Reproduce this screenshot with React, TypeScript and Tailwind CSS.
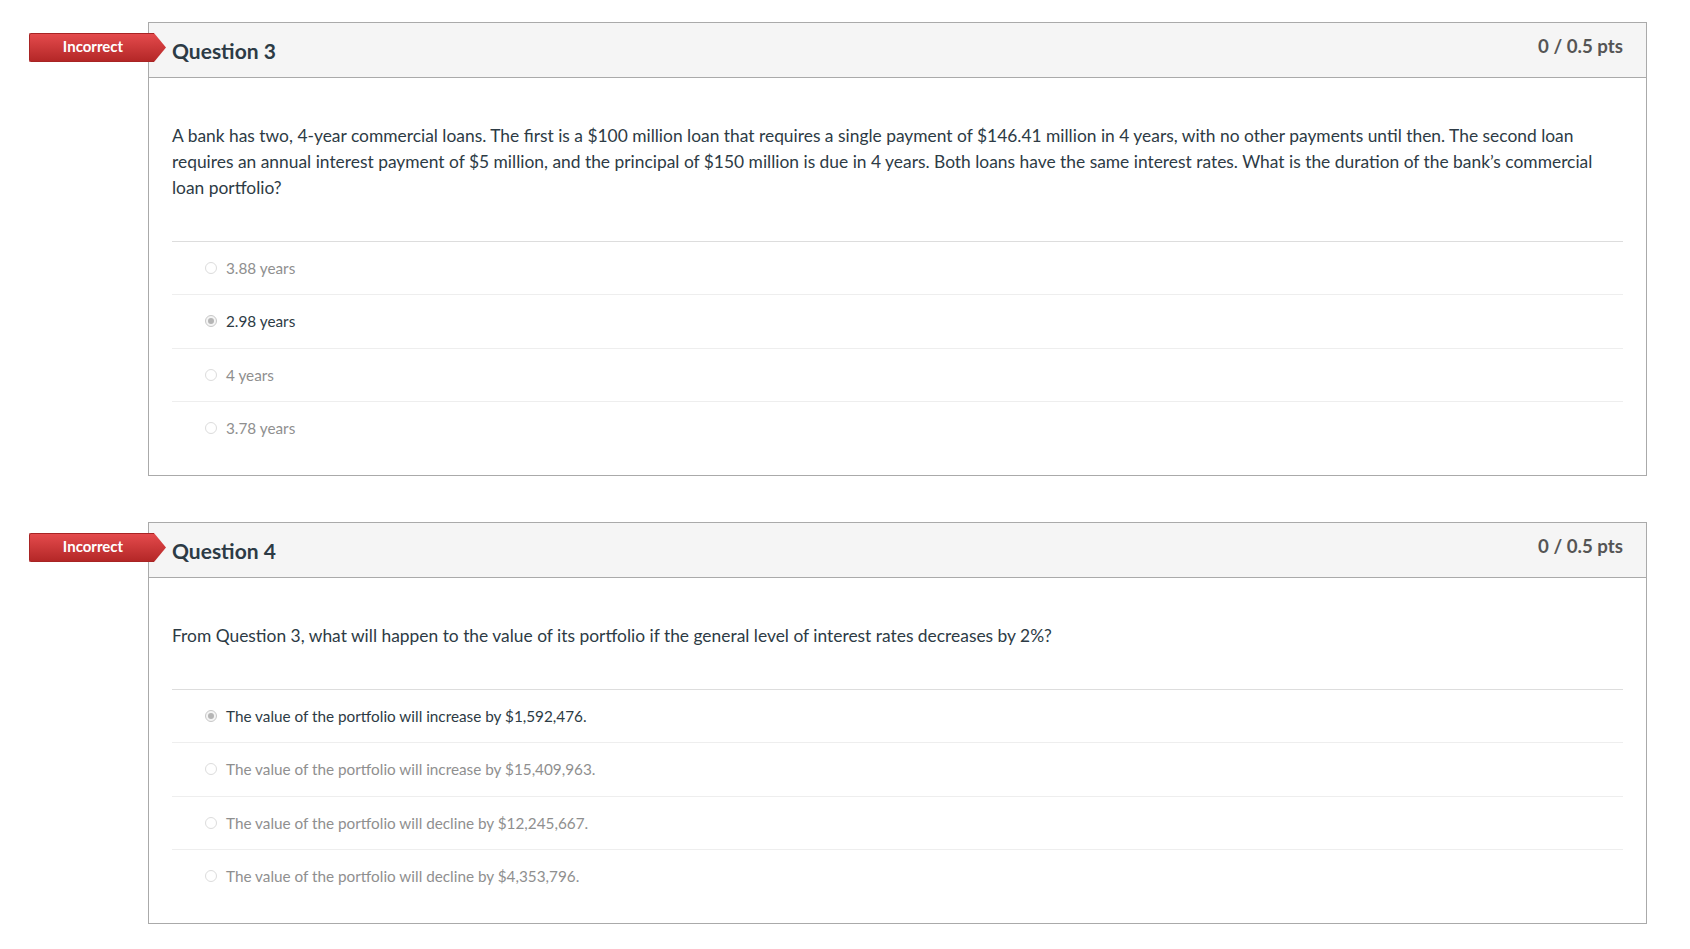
import React from "react";

type Q = {
  num: number;
  text: string;
  answers: string[];
  selected: number;
};

const questions: Q[] = [
  {
    num: 3,
    text:
      "A bank has two, 4-year commercial loans. The first is a $100 million loan that requires a single payment of $146.41 million in 4 years, with no other payments until then. The second loan requires an annual interest payment of $5 million, and the principal of $150 million is due in 4 years. Both loans have the same interest rates. What is the duration of the bank\u2019s commercial loan portfolio?",
    answers: ["3.88 years", "2.98 years", "4 years", "3.78 years"],
    selected: 1,
  },
  {
    num: 4,
    text:
      "From Question 3, what will happen to the value of its portfolio if the general level of interest rates decreases by 2%?",
    answers: [
      "The value of the portfolio will increase by $1,592,476.",
      "The value of the portfolio will increase by $15,409,963.",
      "The value of the portfolio will decline by $12,245,667.",
      "The value of the portfolio will decline by $4,353,796.",
    ],
    selected: 0,
  },
];

function Badge() {
  return (
    <div className="absolute left-[-120px] top-[10px] flex h-[29px] items-stretch">
      <div className="flex w-[125px] items-center justify-center rounded-l-[2px] border border-r-0 border-[#a82424] bg-gradient-to-b from-[#e44a4c] to-[#b42727] text-[15px] font-bold text-white">
        <span className="pb-[2px] pl-[2px]">Incorrect</span>
      </div>
      <svg width="12" height="29" viewBox="0 0 12 29" className="block">
        <defs>
          <linearGradient id="bg" x1="0" y1="0" x2="0" y2="1">
            <stop offset="0" stopColor="#e44a4c" />
            <stop offset="1" stopColor="#b42727" />
          </linearGradient>
        </defs>
        <polygon points="0,0 12,14.5 0,29" fill="url(#bg)" />
      </svg>
    </div>
  );
}

function Radio({ checked }: { checked: boolean }) {
  return checked ? (
    <div className="flex h-[12px] w-[12px] items-center justify-center rounded-full border border-[#c8c8c8] bg-[#f4f4f4]">
      <div className="h-[6px] w-[6px] rounded-full bg-[#b5b5b5]" />
    </div>
  ) : (
    <div className="h-[12px] w-[12px] rounded-full border border-[#dcdcdc] bg-white" />
  );
}

function Question({ q }: { q: Q }) {
  return (
    <div className="relative w-[1499px] border border-[#aaaaaa] bg-white">
      <Badge />
      <div className="flex h-[55px] items-start justify-between border-b border-[#aaaaaa] bg-[#f5f5f5] px-[23px]">
        <div className="pt-[13px] text-[21px] font-bold leading-[30px] text-[#2d3b45]">
          Question {q.num}
        </div>
        <div className="pt-[10px] text-[18.7px] font-bold leading-[26px] text-[#555555]">
          0 / 0.5 pts
        </div>
      </div>
      <div className="pb-[21px] pl-[23px] pr-[23px] pt-[45px]">
        <div className="text-[17.4px] leading-[26px] text-[#2d3b45]">{q.text}</div>
        <div className="mt-[40px]">
          {q.answers.map((a, i) => (
            <div
              key={i}
              className={
                "flex h-[53.25px] items-center gap-[9px] border-t pl-[33px] " +
                (i === 0 ? "border-[#dddddd]" : "border-[#eeeeee]")
              }
            >
              <Radio checked={i === q.selected} />
              <span
                className={
                  "text-[15.3px] leading-[20px] " +
                  (i === q.selected ? "text-[#2d3b45]" : "text-[#8f8f8f]")
                }
              >
                {a}
              </span>
            </div>
          ))}
        </div>
      </div>
    </div>
  );
}

export default function App() {
  return (
    <div
      className="min-h-[949px] w-[1690px] bg-white pl-[148px] pt-[22px]"
      style={{ fontFamily: "Lato, 'Liberation Sans', sans-serif" }}
    >
      <div className="flex flex-col gap-[46px]">
        {questions.map((q) => (
          <Question key={q.num} q={q} />
        ))}
      </div>
    </div>
  );
}
